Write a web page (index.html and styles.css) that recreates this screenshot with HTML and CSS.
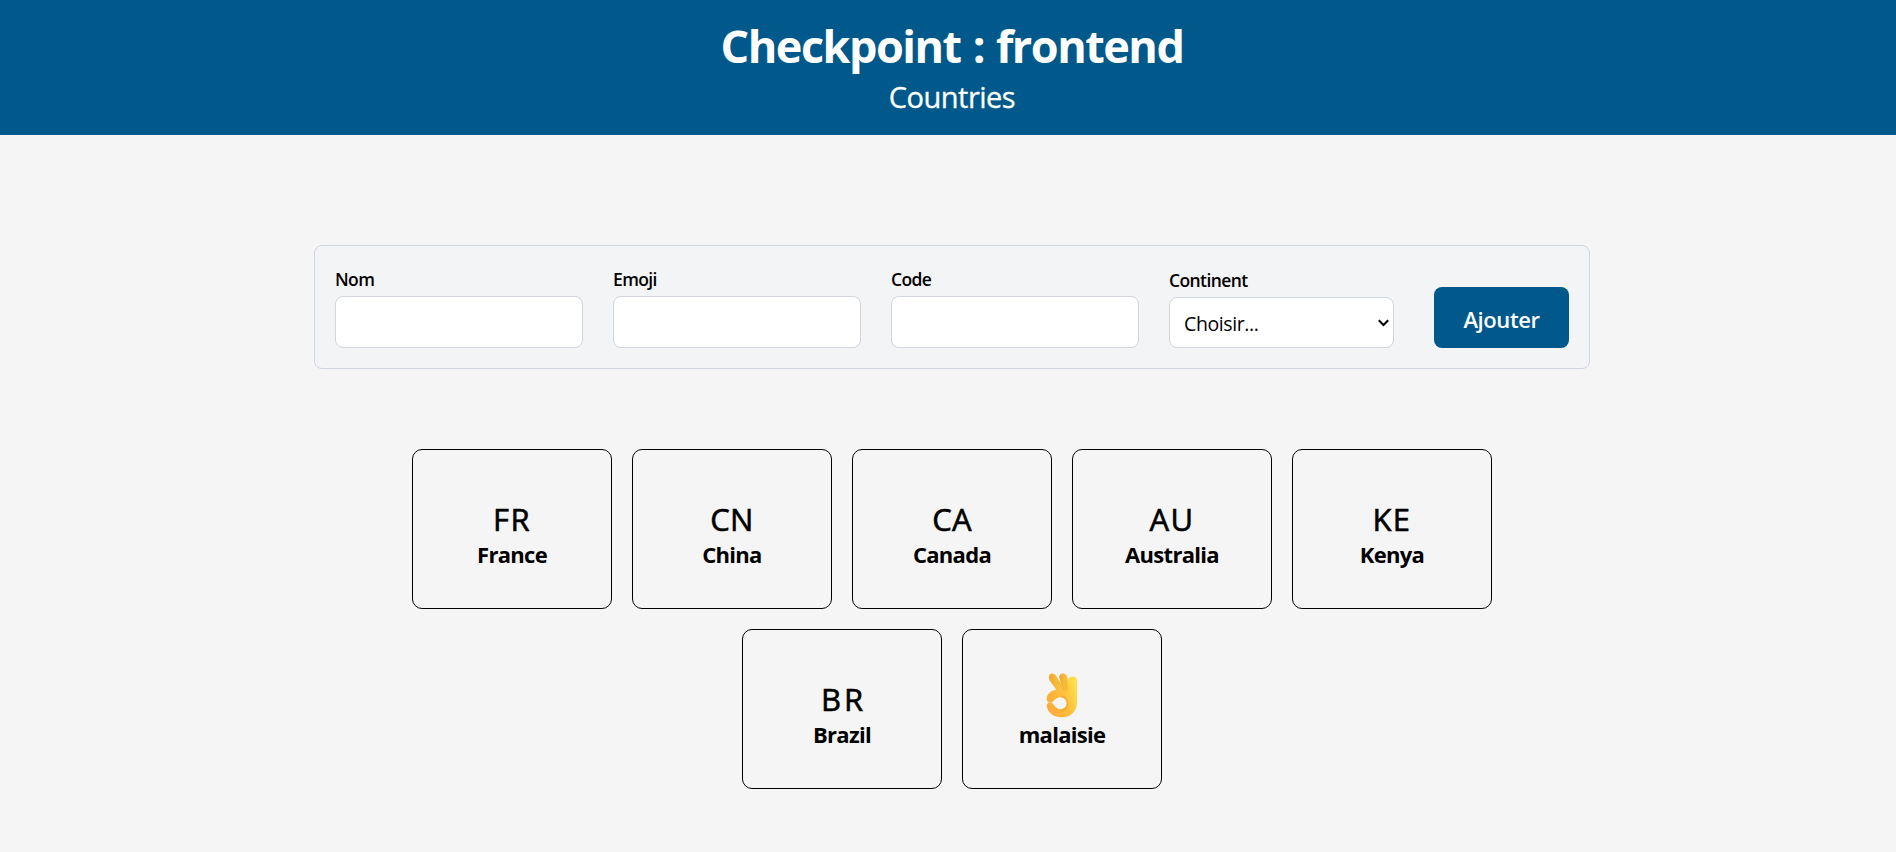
FILE: index.html
```html
<!DOCTYPE html>
<html lang="fr">
<head>
<meta charset="utf-8">
<title>Countries</title>
<link rel="stylesheet" href="styles.css">
</head>
<body>
<div class="page">
  <header class="header">
    <h1 class="title">Checkpoint : frontend</h1>
    <p class="subtitle">Countries</p>
  </header>
  <main class="main">
    <form class="form">
      <label class="field"><span class="label">Nom</span><input class="input" type="text"></label>
      <label class="field"><span class="label">Emoji</span><input class="input" type="text"></label>
      <label class="field"><span class="label">Code</span><input class="input" type="text"></label>
      <div class="field field-select"><span class="label">Continent</span>
        <div class="select"><span class="select-value">Choisir...</span>
          <svg class="chevron" width="11" height="8" viewBox="0 0 11 8"><path d="M.8 1.200 5.500 6 10.200 1.200" fill="none" stroke="#000" stroke-width="2"/></svg>
        </div>
      </div>
      <button class="button" type="button">Ajouter</button>
    </form>
    <section class="cards">
      <a class="card"><span class="code">FR</span><span class="name">France</span></a>
      <a class="card"><span class="code tight">CN</span><span class="name">China</span></a>
      <a class="card"><span class="code tight">CA</span><span class="name">Canada</span></a>
      <a class="card"><span class="code">AU</span><span class="name">Australia</span></a>
      <a class="card"><span class="code">KE</span><span class="name">Kenya</span></a>
      <a class="card"><span class="code wide">BR</span><span class="name">Brazil</span></a>
      <a class="card"><span class="code">
        <svg class="hand" width="32" height="45" viewBox="0 0 32 45">
          <defs>
            <linearGradient id="palm" x1="0" y1=".8" x2="1" y2=".3"><stop offset="0" stop-color="#ffa93c"/><stop offset=".55" stop-color="#ffbd3b"/><stop offset="1" stop-color="#ffdf4a"/></linearGradient>
            <linearGradient id="finger" x1="0" y1="0" x2="1" y2="0"><stop offset="0" stop-color="#f0a634"/><stop offset="1" stop-color="#fdd342"/></linearGradient>
          </defs>
          <path d="M3.600 1.700C5.500-.1 8.300.4 9.800 2.600L20 17.500 13.500 21 4 8C2.700 6 2.300 3.200 3.600 1.700Z" fill="url(#finger)"/>
          <path d="M13.200 4.500C13 1.700 14.800.4 17 .6 19.500.8 21 2.500 21.500 4.700L25 17 18 19Z" fill="url(#finger)"/>
          <path fill-rule="evenodd" d="M22.200 6.500C22.500 4.200 24.400 3.300 26.800 3.400 29.600 3.500 31 5 31 7.500V29C31 38.500 24.600 44.300 16 44.300 7.500 44.300 1.200 39.500.8 32.500.7 30.600 2.500 29 4.800 29.500L5.500 29.800C2.700 30.300.6 28.400.7 25.500.9 20.500 5.200 17 12 16.400L16 17.500 21.800 18ZM14.600 24.300C10.800 24.300 8.800 26.900 5.600 29.800 9 32.700 10.700 36.300 14.600 36.300A6 6 0 0 0 14.600 24.300Z" fill="url(#palm)"/>
          <path d="M11 8 17.500 17.500M19.500 8 21.500 17.500" fill="none" stroke="#e99a2b" stroke-width=".8" opacity=".5"/>
          <path d="M14.600 23.300A7 7 0 0 1 14.600 37.300" fill="none" stroke="#f28b35" stroke-width="1.800" opacity=".4"/>
        </svg></span><span class="name">malaisie</span></a>
    </section>
  </main>
</div>
</body>
</html>
```
FILE: styles.css
```css
* { box-sizing: border-box; }
html { overflow: hidden; }
body {
  margin: 0;
  background: #f5f5f5;
  color: #000;
  font-family: "Open Sans", "Noto Sans", sans-serif;
}
.page { width: 1904px; height: 852px; }
.header {
  height: 135px;
  padding-top: 16px;
  background: #00598a;
  color: #fff;
  text-align: center;
}
.title { margin: 0; font-size: 45px; line-height: 60px; font-weight: 700; letter-spacing: -1.5px; word-spacing: 1.800px; }
.subtitle { margin: 0; font-size: 29px; line-height: 42px; letter-spacing: -.5px; -webkit-text-stroke: .3px; }
.main { display: flex; flex-direction: column; align-items: center; padding-top: 110px; }
.form {
  display: flex;
  align-items: flex-end;
  gap: 30px;
  width: 1276px;
  height: 124px;
  padding: 20px;
  border: 1px solid #d1d5dc;
  border-radius: 8px;
  background: #f3f4f6;
}
.field { display: flex; flex-direction: column; width: 248px; }
.field-select { width: 225px; }
.label { height: 28px; font-size: 17.5px; line-height: 23px; font-weight: 600; letter-spacing: -.6px; }
.input, .select {
  width: 100%;
  height: 52px;
  border: 1px solid #d1d5dc;
  border-radius: 8px;
  background: #fff;
}
.select {
  display: flex;
  align-items: center;
  justify-content: space-between;
  height: 51px;
  padding: 2px 4px 0 14px;
}
.select-value { font-size: 19.5px; line-height: 26px; letter-spacing: -.4px; }
.chevron { margin-bottom: 2px; }
.button {
  width: 135px;
  height: 61px;
  margin-left: 10px;
  padding: 2px 0 0;
  border: 0;
  border-radius: 8px;
  background: #00598a;
  color: #fff;
  font: 600 22px/30px "Open Sans", sans-serif;
  letter-spacing: -.4px;
}
.cards {
  display: flex;
  flex-wrap: wrap;
  justify-content: center;
  gap: 20px;
  width: 1100px;
  margin-top: 80px;
}
.card {
  display: flex;
  flex-direction: column;
  align-items: center;
  width: 200px;
  height: 160px;
  padding-top: 47px;
  border: 1px solid #000;
  border-radius: 10px;
}
.code { height: 43px; font-size: 31px; line-height: 44px; letter-spacing: 1.500px; -webkit-text-stroke: .6px; }
.wide { padding-left: 3px; letter-spacing: 3px; }
.tight { letter-spacing: .3px; }
.name { font-size: 22px; line-height: 28px; font-weight: 700; letter-spacing: -.7px; }
.hand { display: block; margin-top: -4px; }
```
